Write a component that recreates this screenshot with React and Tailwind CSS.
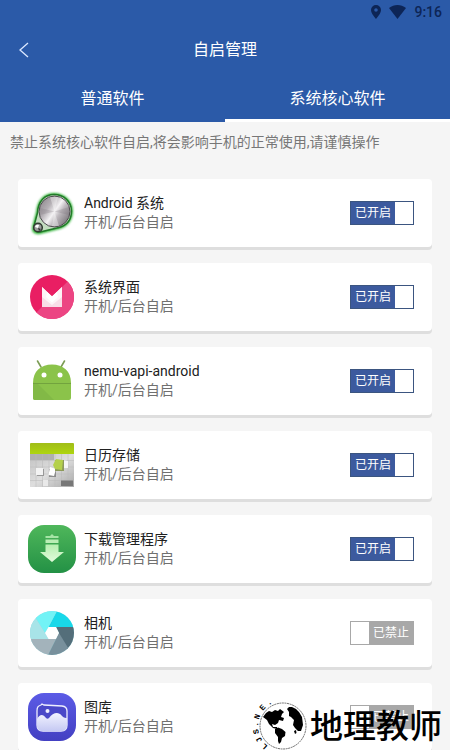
import React, { useState } from 'react';

const AndroidSystemIcon = () => (
  <svg viewBox="0 0 48 48" className="h-12 w-12 shrink-0" aria-hidden="true">
    <defs>
      <filter id="glow" x="-20%" y="-20%" width="140%" height="140%">
        <feGaussianBlur stdDeviation="1.1" />
      </filter>
      <linearGradient id="metal" x1="0" y1="0.15" x2="1" y2="0.85">
        <stop offset="0" stopColor="#8c868b" />
        <stop offset="0.3" stopColor="#b5b0b5" />
        <stop offset="0.5" stopColor="#f4f2f4" />
        <stop offset="0.65" stopColor="#bdb8bd" />
        <stop offset="1" stopColor="#6f6a70" />
      </linearGradient>
    </defs>
    <path d="M8 23 C9 11 16 4 26 4 C37 4 45 12 45 22 C45 32 39 38 32 40 L12 45 C7 46 3 43 4 38 Z" fill="#35b33a" filter="url(#glow)" />
    <path d="M9.500 24 C10 12 17 5.500 26 5.500 C36 5.500 43.500 13 43.500 22 C43.500 31 38 36.500 31 38.500 L12 43 C8 43.500 5 41 6 37 Z" fill="#c3dcc0" stroke="#217a28" strokeWidth="1.500" />
    <circle cx="26.500" cy="22.500" r="15.500" fill="url(#metal)" stroke="#4d4a4e" strokeWidth="1" />
    <path d="M26.500 22.500 L22 8 L30 8 Z M26.500 22.500 L24 37 L31 37 Z" fill="#ffffff" opacity="0.35" />
    <path d="M26.500 22.500 L41 18 L41 26 Z M26.500 22.500 L12 19 L12 26 Z" fill="#6c666c" opacity="0.2" />
    <circle cx="10" cy="38.500" r="4.300" fill="#9c9c9c" stroke="#2f3a2f" strokeWidth="1.500" />
    <path d="M7 38 a3 3 0 0 1 4 -2 l-1 3 z" fill="#ffffff" />
    <path d="M10 39 l3 1 -2 2 z" fill="#333333" />
  </svg>
);

const SystemUiIcon = () => (
  <svg viewBox="0 0 48 48" className="h-12 w-12 shrink-0" aria-hidden="true">
    <circle cx="24" cy="24" r="22" fill="#e91e63" />
    <path d="M39.600 8.400 A22 22 0 0 1 8.400 39.600 Z" fill="#ec4583" />
    <path d="M14 14 L24 23.500 L34 14 V34 H14 Z" fill="#f8dde7" />
    <path d="M14 14 L24 23.500 L34 14 V24 L24 32 L14 24 Z" fill="#fdf4f7" />
    <path d="M19 19 L24 23.500 L29 19 L30 24 L24 29.500 L18 24 Z" fill="#ffffff" />
  </svg>
);

const RobotIcon = () => (
  <svg viewBox="0 0 48 48" className="h-12 w-12 shrink-0" aria-hidden="true">
    <path d="M9.500 4 L13 10 M36.500 4 L33 10" stroke="#7c9c55" strokeWidth="1.600" strokeLinecap="round" />
    <path d="M5 26 C5 14 13 7.500 24 7.500 C35 7.500 43 14 43 26 Z" fill="#8bc34a" />
    <path d="M5 26 H43 V41 a2 2 0 0 1 -2 2 H7 a2 2 0 0 1 -2 -2 Z" fill="#8bc34a" />
    <path d="M5 26 H9 L26 43 H7 a2 2 0 0 1 -2 -2 Z" fill="#82b946" />
    <path d="M5 26.500 H43" stroke="#72a33e" strokeWidth="1" />
    <circle cx="16" cy="18" r="2.500" fill="#ffffff" />
    <circle cx="32" cy="18" r="2.500" fill="#ffffff" />
  </svg>
);

const CalendarIcon = () => (
  <svg viewBox="0 0 48 48" className="h-12 w-12 shrink-0" aria-hidden="true">
    <defs>
      <linearGradient id="lime" x1="0" y1="0" x2="0" y2="1">
        <stop offset="0" stopColor="#a1bd18" />
        <stop offset="1" stopColor="#aed50f" />
      </linearGradient>
      <linearGradient id="sheet" x1="0" y1="0" x2="1" y2="1">
        <stop offset="0" stopColor="#c2c2c2" />
        <stop offset="0.5" stopColor="#dedede" />
        <stop offset="1" stopColor="#a9a9a9" />
      </linearGradient>
    </defs>
    <path d="M2 13 H46 V46 H2 Z" fill="url(#sheet)" />
    <path d="M2 13 H26 V19 H2 Z" fill="#b0b0b0" />
    <path d="M8 13 V46 M14.500 13 V46 M21 13 V46 M27 13 V46 M33.500 13 V46 M40 13 V46 M2 19.500 H46 M2 26 H46 M2 33 H46 M2 39.500 H46" stroke="#b8b8b8" strokeWidth="0.500" />
    <path d="M3 2 H45 a1 1 0 0 1 1 1 V13 H2 V3 a1 1 0 0 1 1 -1 Z" fill="url(#lime)" />
    <path d="M9 28 H16 V35 H9 Z" fill="#989898" />
    <path d="M8 27 H15 V34 H8 Z" fill="#f3f3f3" />
    <path d="M21 28 H28 V36 H21 Z" fill="#8c8c8c" />
    <path d="M22 26 L28 28 L26 35 L20.500 34 Z" fill="#ffffff" />
    <path d="M34 19 L40 20 V27 H34 Z" fill="#f6f6f6" />
    <path d="M27 19 H36 V30 H27 Z" fill="#8d9a5a" />
    <path d="M28 18 L35 19 L34 29 L27 28 L25 24 Z" fill="#b4d04b" />
    <path d="M15 39 H20 V45 H15 Z" fill="#e9e9e9" />
    <path d="M33 39.500 H45 V45 H33 Z" fill="#777777" />
  </svg>
);

const DownloadIcon = () => (
  <svg viewBox="0 0 48 48" className="h-12 w-12 shrink-0" aria-hidden="true">
    <defs>
      <linearGradient id="green" x1="0" y1="0" x2="0" y2="1">
        <stop offset="0" stopColor="#4fb75b" />
        <stop offset="1" stopColor="#239145" />
      </linearGradient>
      <linearGradient id="arrow" x1="0" y1="0" x2="0" y2="1">
        <stop offset="0" stopColor="#b5efb0" />
        <stop offset="1" stopColor="#e3fbdc" />
      </linearGradient>
    </defs>
    <rect width="48" height="48" rx="16" fill="url(#green)" />
    <path d="M17.500 11 H22 L24 9 L26 11 H30.500 V13 H17.500 Z" fill="#a5e4a5" />
    <path d="M17.500 14.500 H30.500 V18 H17.500 Z" fill="#b9eeb5" />
    <path d="M17.500 19.500 H30.500 V27 H36 L24 37 L12 27 H17.500 Z" fill="url(#arrow)" />
  </svg>
);

const CameraIcon = () => (
  <svg viewBox="0 0 48 48" className="h-12 w-12 shrink-0" aria-hidden="true">
    <defs>
      <clipPath id="lens">
        <circle cx="24" cy="24" r="22" />
      </clipPath>
    </defs>
    <g clipPath="url(#lens)">
      <rect width="48" height="48" fill="#8fd8df" />
      <path d="M31 24 L28 18 H48 V50 L28 30 Z" fill="#546e7a" />
      <path d="M20.500 18 L30 0 H48 V18 Z" fill="#18d8e9" />
      <path d="M17 24 L7 8 L14 0 H30 L20.500 18 Z" fill="#72f3f6" />
      <path d="M20.500 30 H0 V0 L7 8 L17 24 Z" fill="#a8e4e8" />
      <path d="M28 30 L18 50 H0 V30 Z" fill="#a3b3bb" />
      <path d="M31 24 L42 42 L34 50 H18 L28 30 Z" fill="#78909c" />
    </g>
    <path d="M20.500 18 H28 L31 24 L28 30 H20.500 L17 24 Z" fill="#ffffff" />
  </svg>
);

const GalleryIcon = () => (
  <svg viewBox="0 0 48 48" className="h-12 w-12 shrink-0" aria-hidden="true">
    <defs>
      <linearGradient id="violet" x1="0" y1="0" x2="0" y2="1">
        <stop offset="0" stopColor="#5b5be6" />
        <stop offset="1" stopColor="#4340c2" />
      </linearGradient>
      <linearGradient id="hills" x1="0" y1="0" x2="0" y2="1">
        <stop offset="0" stopColor="#f2f3ff" />
        <stop offset="1" stopColor="#c5c9f3" />
      </linearGradient>
    </defs>
    <rect width="48" height="48" rx="16" fill="url(#violet)" />
    <path d="M9 18 C9 14 10 13 13 12 L14 11 L16 12 L34 13 C38 13.500 39 15 39 18 V32 C39 36 37 38 33 38 H15 C11 38 9 36 9 32 Z" fill="#4a48c8" stroke="#eeefff" strokeWidth="1.300" />
    <path d="M9 26 C12 21 15 21 18 25 C19 26 20 26 21 25 C25 20 30 18 34 23 C36 25 38 25 39 25 V32 C39 36 37 38 33 38 H15 C11 38 9 36 9 32 Z" fill="url(#hills)" />
    <circle cx="19.500" cy="18" r="2" fill="#eeefff" />
  </svg>
);

const GlobeMark = () => (
  <svg viewBox="0 0 60 52" className="h-[52px] w-[60px] shrink-0 overflow-visible" aria-hidden="true">
    <circle cx="33" cy="28" r="23" fill="#ffffff" stroke="#333333" strokeWidth="0.700" strokeDasharray="2 0.600" />
    <path d="M13 19 L16 15 L19 13 L22 14 L25 12 L28 13 L30 11 L34 14 L32 16 L31 19 L34 20 L33 23 L29 22 L28 25 L25 27 L22 26 L23 29 L27 29 L27 31 L23 30 L19 26 L17 22 Z" fill="#000000" />
    <path d="M25 31 L28 29.500 L32 31 L35.500 34 L35 38 L32 40 L31 44 L29 46 L28 43 L28 39 L25 35 Z" fill="#000000" />
    <path d="M37 11 L39 9 L42 9 L46 11 L49 14 L52 19 L53 27 L51 33 L48 33 L45 30 L43 27 L44 22 L41 19 L39 18 L39 14 Z" fill="#000000" />
    <path d="M44 33 l2 -1 0.500 3 -1.500 1 z" fill="#000000" />
    <g fontFamily="Liberation Mono, monospace" fontSize="8" fontWeight="700" fill="#000000" textAnchor="middle">
      <text x="33" y="3" transform="rotate(-138 33 28)">L</text>
      <text x="33" y="3" transform="rotate(-120 33 28)">J</text>
      <text x="33" y="3" transform="rotate(-102 33 28)">S</text>
      <text x="33" y="3" transform="rotate(-86 33 28)">.</text>
      <text x="33" y="3" transform="rotate(-70 33 28)">N</text>
      <text x="33" y="3" transform="rotate(-48 33 28)">E</text>
      <text x="33" y="3" transform="rotate(-30 33 28)">.</text>
    </g>
  </svg>
);

const initialApps = [
  { id: 'android', name: 'Android 系统', Icon: AndroidSystemIcon, enabled: true },
  { id: 'systemui', name: '系统界面', Icon: SystemUiIcon, enabled: true },
  { id: 'nemu', name: 'nemu-vapi-android', Icon: RobotIcon, enabled: true },
  { id: 'calendar', name: '日历存储', Icon: CalendarIcon, enabled: true },
  { id: 'download', name: '下载管理程序', Icon: DownloadIcon, enabled: true },
  { id: 'camera', name: '相机', Icon: CameraIcon, enabled: false },
  { id: 'gallery', name: '图库', Icon: GalleryIcon, enabled: false },
];

const StatusBar = () => (
  <div className="flex h-6 items-center justify-end gap-2 pr-2 text-[#0d2556]">
    <svg viewBox="0 0 10 14" className="h-[14px] w-[10px]" fill="currentColor" aria-hidden="true">
      <path fillRule="evenodd" d="M5 0 A5 5 0 0 1 10 5 C10 8.500 5 14 5 14 C5 14 0 8.500 0 5 A5 5 0 0 1 5 0 Z M5 3.200 A1.800 1.800 0 1 0 5 6.800 A1.800 1.800 0 1 0 5 3.200 Z" />
    </svg>
    <svg viewBox="0 0 17 14" className="h-[14px] w-[17px]" fill="currentColor" aria-hidden="true">
      <path d="M8.500 14 L0 3 C5 -1 12 -1 17 3 Z" />
    </svg>
    <span className="text-sm font-medium">9:16</span>
  </div>
);

const AutoStartSwitch = ({ id, checked, onChange }) => (
  <label htmlFor={id} className="relative block h-6 w-16 shrink-0 cursor-pointer">
    <input
      id={id}
      type="checkbox"
      role="switch"
      checked={checked}
      onChange={onChange}
      className="absolute inset-0 m-0 h-6 w-16 cursor-pointer opacity-0"
    />
    {checked ? (
      <span className="flex h-6 border border-[#3b5580] bg-[#3c5a9e] text-xs leading-[22px] text-white">
        <span className="flex-1 text-center">已开启</span>
        <span className="w-[18px] bg-white" />
      </span>
    ) : (
      <span className="flex h-6 border border-[#a8a8a8] bg-[#a8a8a8] text-xs leading-[22px] text-white">
        <span className="w-[18px] bg-white" />
        <span className="flex-1 text-center">已禁止</span>
      </span>
    )}
  </label>
);

const AppCard = ({ app, onToggle }) => {
  const { id, name, Icon, enabled } = app;

  return (
    <li className="flex h-[68px] shrink-0 items-center gap-2 rounded bg-white pl-[10px] pr-[18px] shadow-[0_3px_0_#dedede]">
      <Icon />
      <div className="min-w-0 flex-1 text-sm leading-[19px]">
        <p className="truncate text-[#212121]">{name}</p>
        <p className="truncate text-[#707070]">开机/后台自启</p>
      </div>
      <AutoStartSwitch id={`switch-${id}`} checked={enabled} onChange={() => onToggle(id)} />
    </li>
  );
};

const App = () => {
  const [activeTab, setActiveTab] = useState('core');
  const [apps, setApps] = useState(initialApps);

  const toggleApp = (id) => {
    setApps(apps.map((app) => (app.id === id ? { ...app, enabled: !app.enabled } : app)));
  };

  return (
    <div className="relative flex h-screen flex-col overflow-hidden bg-[#f5f5f5] font-[Roboto,'Noto_Sans_CJK_SC',sans-serif]">
      {/* Header */}
      <header className="shrink-0 bg-[#2b5aa8] text-white">
        <StatusBar />
        <div className="grid h-[52px] grid-cols-[48px_1fr_48px] items-center">
          <button type="button" aria-label="返回" className="flex h-full items-center justify-center">
            <svg viewBox="0 0 10 16" className="h-4 w-[10px]" fill="none" stroke="#dbe8ff" strokeWidth="1.300" aria-hidden="true">
              <path d="M9 1 L1 8 L9 15" />
            </svg>
          </button>
          <h1 className="text-center text-base">自启管理</h1>
        </div>
        <nav className="grid h-[46px] grid-cols-2 text-base">
          <button
            type="button"
            onClick={() => setActiveTab('normal')}
            className={activeTab === 'normal' ? 'border-b-3 border-white pt-[3px]' : 'border-b-3 border-transparent pt-[3px]'}
          >
            普通软件
          </button>
          <button
            type="button"
            onClick={() => setActiveTab('core')}
            className={activeTab === 'core' ? 'border-b-3 border-white pt-[3px]' : 'border-b-3 border-transparent pt-[3px]'}
          >
            系统核心软件
          </button>
        </nav>
      </header>

      {/* Notice */}
      <p className="shrink-0 px-[10px] py-[10px] text-sm leading-5 text-[#777777]">
        禁止系统核心软件自启,将会影响手机的正常使用,请谨慎操作
      </p>

      {/* App list */}
      <ul className="flex flex-1 flex-col gap-4 overflow-hidden px-[18px] pt-[17px]">
        {apps.map((app) => (
          <AppCard key={app.id} app={app} onToggle={toggleApp} />
        ))}
      </ul>

      {/* Watermark */}
      <div className="pointer-events-none absolute bottom-0 right-2 flex items-center text-black">
        <GlobeMark />
        <span className="font-[KaiTi,'AR_PL_UKai_CN','Noto_Sans_CJK_SC',serif] text-[33px] font-medium leading-none">地理教师</span>
      </div>
    </div>
  );
};

export default App;
